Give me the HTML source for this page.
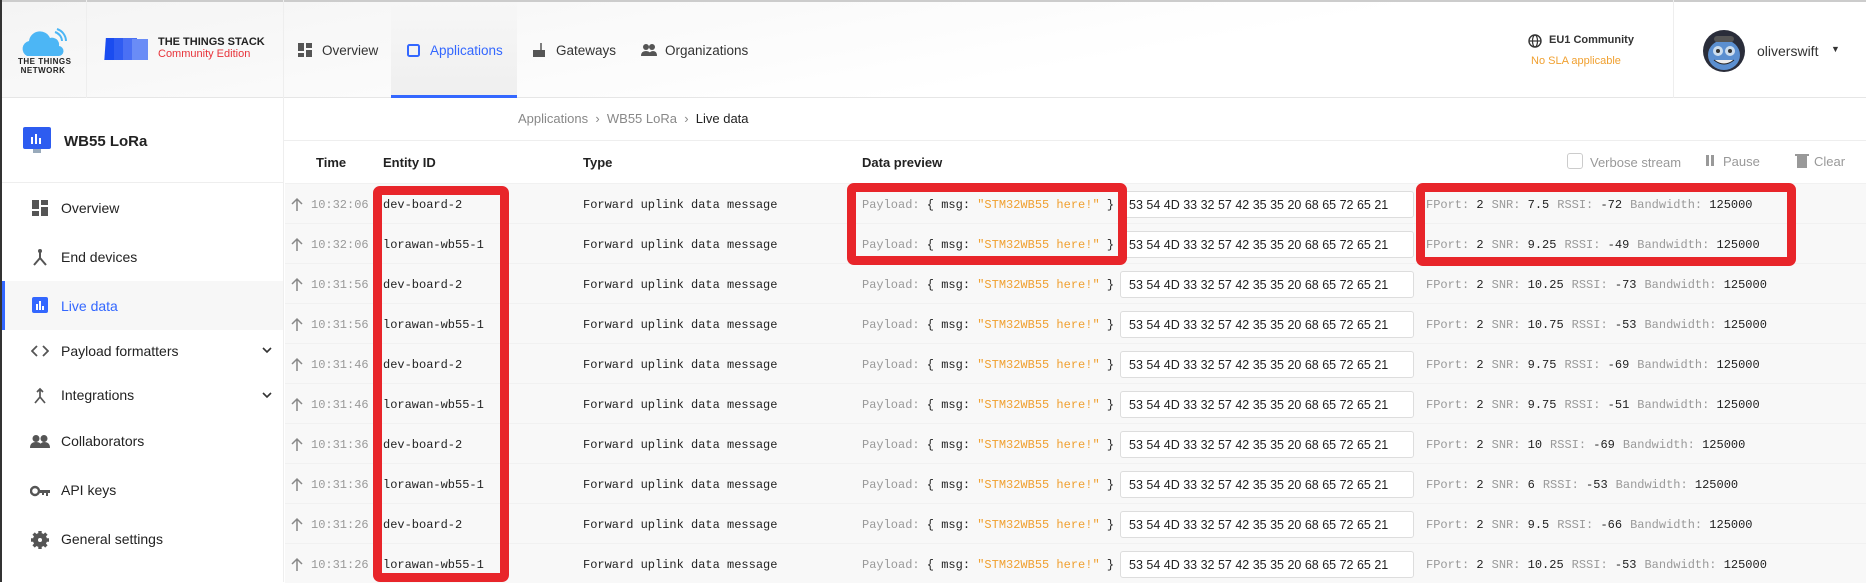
<!DOCTYPE html>
<html><head><meta charset="utf-8"><style>
*{margin:0;padding:0;box-sizing:border-box}
body{width:1866px;height:582px;overflow:hidden;background:#fff;font-family:"Liberation Sans",sans-serif;color:#222;position:relative}
.a{position:absolute;white-space:nowrap}
.m{font-family:"Liberation Mono",monospace;font-size:12px}
.s13{font-size:13px}
.nav{font-size:13.5px;color:#333;top:43px}
.side{font-size:14px;color:#222;left:61px}
.g{color:#999}
.o{color:#f0a030}
.row{position:absolute;left:285px;width:1581px;height:40px;background:#f8f8f8;border-top:1px solid #f1f1f1}
.hex{position:absolute;left:1120px;width:294px;height:27px;background:#fff;border:1px solid #ddd;border-radius:3px;font-size:12.5px;padding:6px 0 0 8px;color:#222;letter-spacing:0px}
.red{position:absolute;border:9px solid #e8252a;border-radius:7px}
.sp{margin-left:8px}
</style></head><body>
<div class="a" style="left:0;top:0;width:1866px;height:98px;background:linear-gradient(170deg,#f4f4f4,#fff 60%);border-bottom:1px solid #e6e6e6;border-top:2px solid #ccc"></div>
<div class="a" style="left:0;top:0;width:2px;height:582px;background:#333"></div>
<div class="a" style="left:86px;top:0;width:1px;height:98px;background:#eee"></div>
<div class="a" style="left:283px;top:0;width:1px;height:582px;background:#eee"></div>
<div class="a" style="left:1673px;top:0;width:1px;height:98px;background:#eee"></div>
<svg class="a" style="left:19px;top:28px" width="50" height="30" viewBox="0 0 50 30"><path d="M8 28 a8 8 0 0 1 2-15 a11 11 0 0 1 21-3 a7 7 0 0 1 9 8 a5 5 0 0 1 -1 10z" fill="#4cb6f5"/><path d="M36 4 a10 10 0 0 1 7 9 M38 1 a13 13 0 0 1 9 12" stroke="#4cb6f5" stroke-width="2" fill="none"/></svg>
<div class="a" style="left:18px;top:57px;font-size:8px;font-weight:bold;line-height:9px;text-align:center;width:50px;letter-spacing:0.5px">THE THINGS<br>NETWORK</div>
<svg class="a" style="left:104px;top:36px" width="46" height="26" viewBox="0 0 46 26"><rect x="2" y="2" width="14" height="22" fill="#1a4cf0" transform="skewX(-4)"/><rect x="10" y="2" width="14" height="22" fill="#2f5cf2"/><rect x="19" y="2" width="14" height="22" fill="#4a70f4"/><rect x="28" y="3" width="16" height="21" fill="#6a8cf6"/></svg>
<div class="a" style="left:158px;top:36px;font-size:11px;font-weight:bold;line-height:12px">THE THINGS STACK<br><span style="color:#e8333a;font-weight:normal">Community Edition</span></div>
<svg class="a" style="left:298px;top:43px" width="14" height="14"><rect x="0" y="0" width="6" height="8" fill="#555"/><rect x="8" y="0" width="6" height="5" fill="#555"/><rect x="0" y="10" width="6" height="4" fill="#555"/><rect x="8" y="7" width="6" height="7" fill="#555"/></svg>
<div class="a nav" style="left:322px">Overview</div>
<div class="a" style="left:391px;top:2px;width:126px;height:96px;background:linear-gradient(#f7f7f7,#efefef);border-bottom:3px solid #3367ff"></div>
<svg class="a" style="left:407px;top:44px" width="13" height="13"><rect x="1" y="1" width="11" height="11" rx="1.5" fill="none" stroke="#3367ff" stroke-width="2"/></svg>
<div class="a nav" style="left:430px;color:#3367ff">Applications</div>
<svg class="a" style="left:532px;top:42px" width="14" height="16"><rect x="1" y="8" width="12" height="7" fill="#555"/><line x1="9" y1="1" x2="9" y2="8" stroke="#555" stroke-width="1.5"/></svg>
<div class="a nav" style="left:556px">Gateways</div>
<svg class="a" style="left:641px;top:44px" width="16" height="12"><circle cx="5" cy="3" r="3" fill="#555"/><circle cx="11" cy="3" r="3" fill="#555"/><path d="M0 12 q0-5 5-5 q5 0 5 5z M8 12 q0-5 4-5 q4 0 4 5z" fill="#555"/></svg>
<div class="a nav" style="left:665px">Organizations</div>
<svg class="a" style="left:1528px;top:34px" width="14" height="14"><circle cx="7" cy="7" r="6" fill="none" stroke="#333" stroke-width="1.4"/><ellipse cx="7" cy="7" rx="2.5" ry="6" fill="none" stroke="#333" stroke-width="1.2"/><line x1="1" y1="7" x2="13" y2="7" stroke="#333" stroke-width="1.2"/></svg>
<div class="a" style="left:1549px;top:34px;font-size:11px;font-weight:bold;color:#333">EU1 Community</div>
<div class="a o" style="left:1531px;top:55px;font-size:11px">No SLA applicable</div>
<svg class="a" style="left:1702px;top:30px" width="44" height="42"><circle cx="22" cy="21" r="21" fill="#2a2d3a"/><ellipse cx="22" cy="25" rx="16" ry="15" fill="#5b8fd0"/><circle cx="16" cy="21" r="5" fill="#cde"/><circle cx="28" cy="21" r="5" fill="#cde"/><circle cx="16" cy="21" r="2" fill="#333"/><circle cx="28" cy="21" r="2" fill="#333"/><path d="M12 30 q10 8 20 0" fill="#eee" stroke="#222"/><rect x="12" y="6" width="20" height="6" rx="3" fill="#555"/></svg>
<div class="a" style="left:1757px;top:43px;font-size:14px;color:#333">oliverswift</div>
<div class="a" style="left:1831px;top:44px;font-size:9px;color:#333">▼</div>
<svg class="a" style="left:23px;top:127px" width="28" height="26"><rect x="0" y="0" width="28" height="22" rx="2" fill="#2d5cf0"/><rect x="10" y="22" width="8" height="4" fill="#9ab"/><rect x="8" y="10" width="2" height="7" fill="#fff"/><rect x="12" y="7" width="2" height="10" fill="#fff"/><rect x="16" y="11" width="2" height="6" fill="#fff"/></svg>
<div class="a" style="left:64px;top:133px;font-size:15px;font-weight:bold;color:#222">WB55 LoRa</div>
<div class="a" style="left:2px;top:182px;width:281px;height:1px;background:#eee"></div>
<svg class="a" style="left:32px;top:200px" width="16" height="16"><rect x="0" y="0" width="7" height="9" fill="#555"/><rect x="9" y="0" width="7" height="5" fill="#555"/><rect x="0" y="11" width="7" height="5" fill="#555"/><rect x="9" y="7" width="7" height="9" fill="#555"/></svg>
<div class="a side" style="top:200px">Overview</div>
<svg class="a" style="left:32px;top:249px" width="16" height="18"><path d="M8 1v8 M8 9l-6 7 M8 9l6 7" stroke="#555" stroke-width="2" fill="none"/><circle cx="8" cy="2" r="2" fill="#555"/></svg>
<div class="a side" style="top:249px">End devices</div>
<div class="a" style="left:2px;top:281px;width:281px;height:49px;background:#f7f7f7;border-left:3px solid #3367ff"></div>
<svg class="a" style="left:32px;top:297px" width="16" height="16"><rect width="16" height="16" rx="2" fill="#3367ff"/><rect x="4" y="7" width="2" height="6" fill="#fff"/><rect x="7" y="4" width="2" height="9" fill="#fff"/><rect x="10" y="9" width="2" height="4" fill="#fff"/></svg>
<div class="a side" style="top:298px;color:#3367ff">Live data</div>
<svg class="a" style="left:31px;top:345px" width="18" height="12"><path d="M6 1l-5 5 5 5 M12 1l5 5-5 5" stroke="#555" stroke-width="1.8" fill="none"/></svg>
<div class="a side" style="top:343px">Payload formatters</div>
<svg class="a" style="left:262px;top:347px" width="10" height="7"><path d="M1 1l4 4 4-4" stroke="#333" stroke-width="1.6" fill="none"/></svg>
<svg class="a" style="left:33px;top:387px" width="14" height="18"><path d="M7 2v8 M7 10l-5 6 M7 10l5 6 M4 5l3-3 3 3" stroke="#555" stroke-width="1.7" fill="none"/></svg>
<div class="a side" style="top:387px">Integrations</div>
<svg class="a" style="left:262px;top:392px" width="10" height="7"><path d="M1 1l4 4 4-4" stroke="#333" stroke-width="1.6" fill="none"/></svg>
<svg class="a" style="left:30px;top:435px" width="20" height="13"><circle cx="6" cy="3.5" r="3.5" fill="#555"/><circle cx="14" cy="3.5" r="3.5" fill="#555"/><path d="M0 13 q0-6 6-6 q6 0 6 6z M9 13 q1-6 5-6 q6 0 6 6z" fill="#555"/></svg>
<div class="a side" style="top:433px">Collaborators</div>
<svg class="a" style="left:30px;top:485px" width="21" height="12"><circle cx="5" cy="6" r="4" fill="none" stroke="#555" stroke-width="2.4"/><path d="M9 5h11v3h-2v3h-2v-3h-2v2h-2v-2h-3z" fill="#555"/></svg>
<div class="a side" style="top:482px">API keys</div>
<svg class="a" style="left:31px;top:531px" width="18" height="18" viewBox="0 0 18 18"><circle cx="9" cy="9" r="5" fill="none" stroke="#555" stroke-width="4"/><g stroke="#555" stroke-width="3.4"><line x1="9" y1="0" x2="9" y2="18"/><line x1="0" y1="9" x2="18" y2="9"/><line x1="2.6" y1="2.6" x2="15.4" y2="15.4"/><line x1="15.4" y1="2.6" x2="2.6" y2="15.4"/></g><circle cx="9" cy="9" r="2" fill="#fff"/></svg>
<div class="a side" style="top:531px">General settings</div>
<div class="a" style="left:284px;top:140px;width:1582px;height:1px;background:#eee"></div>
<div class="a s13" style="left:518px;top:111px;color:#888">Applications &nbsp;›&nbsp; WB55 LoRa &nbsp;›&nbsp; <span style="color:#222">Live data</span></div>
<div class="a s13" style="left:316px;top:155px;font-weight:bold">Time</div>
<div class="a s13" style="left:383px;top:155px;font-weight:bold">Entity ID</div>
<div class="a s13" style="left:583px;top:155px;font-weight:bold">Type</div>
<div class="a s13" style="left:862px;top:155px;font-weight:bold">Data preview</div>
<div class="a" style="left:1567px;top:153px;width:16px;height:16px;border:1px solid #ccc;border-radius:3px;background:#fff"></div>
<div class="a s13 g" style="left:1590px;top:155px">Verbose stream</div>
<div class="a" style="left:1706px;top:155px;width:3px;height:11px;background:#999"></div>
<div class="a" style="left:1711px;top:155px;width:3px;height:11px;background:#999"></div>
<div class="a s13 g" style="left:1723px;top:154px">Pause</div>
<div class="a" style="left:1797px;top:156px;width:10px;height:12px;background:#999"></div>
<div class="a" style="left:1795px;top:154px;width:14px;height:2px;background:#999"></div>
<div class="a s13 g" style="left:1814px;top:154px">Clear</div>
<div id="rows"></div>
<script>
var d=[["10:32:06","dev-board-2","7.5","-72"],["10:32:06","lorawan-wb55-1","9.25","-49"],["10:31:56","dev-board-2","10.25","-73"],["10:31:56","lorawan-wb55-1","10.75","-53"],["10:31:46","dev-board-2","9.75","-69"],["10:31:46","lorawan-wb55-1","9.75","-51"],["10:31:36","dev-board-2","10","-69"],["10:31:36","lorawan-wb55-1","6","-53"],["10:31:26","dev-board-2","9.5","-66"],["10:31:26","lorawan-wb55-1","10.25","-53"]];
var h="";
d.forEach(function(r,i){var t=183+i*40,y=t+15;
h+='<div class="row" style="top:'+t+'px"></div>';
h+='<svg class="a" style="left:291px;top:'+(y-1)+'px" width="12" height="15"><path d="M6 14V2 M1 7l5-5 5 5" stroke="#888" stroke-width="1.5" fill="none"/></svg>';
h+='<div class="a m g" style="left:311px;top:'+y+'px">'+r[0]+'</div>';
h+='<div class="a m" style="left:383px;top:'+y+'px">'+r[1]+'</div>';
h+='<div class="a m" style="left:583px;top:'+y+'px">Forward uplink data message</div>';
h+='<div class="a m" style="left:862px;top:'+y+'px"><span class="g">Payload:</span> { msg: <span class="o">"STM32WB55 here!"</span> }</div>';
h+='<div class="hex" style="top:'+(t+8)+'px">53 54 4D 33 32 57 42 35 35 20 68 65 72 65 21</div>';
h+='<div class="a m" style="left:1426px;top:'+y+'px"><span class="g">FPort:</span> 2<span class="sp g">SNR:</span> '+r[2]+'<span class="sp g">RSSI:</span> '+r[3]+'<span class="sp g">Bandwidth:</span> 125000</div>';
});
document.getElementById("rows").innerHTML=h;
</script>
<div class="red" style="left:373px;top:186px;width:136px;height:396px"></div>
<div class="red" style="left:847px;top:183px;width:280px;height:82px"></div>
<div class="red" style="left:1416px;top:183px;width:380px;height:83px"></div>
</body></html>
